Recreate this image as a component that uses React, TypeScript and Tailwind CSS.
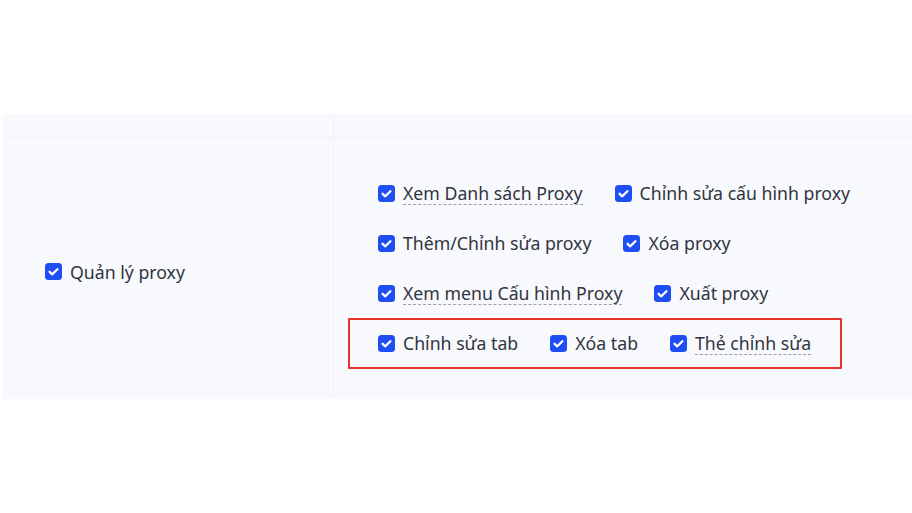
import React from 'react';

interface Perm {
  label: string;
  dashed?: boolean;
}

const rows: Perm[][] = [
  [{ label: 'Xem Danh sách Proxy', dashed: true }, { label: 'Chỉnh sửa cấu hình proxy' }],
  [{ label: 'Thêm/Chỉnh sửa proxy' }, { label: 'Xóa proxy' }],
  [{ label: 'Xem menu Cấu hình Proxy', dashed: true }, { label: 'Xuất proxy' }],
  [{ label: 'Chỉnh sửa tab' }, { label: 'Xóa tab' }, { label: 'Thẻ chỉnh sửa', dashed: true }],
];

function CheckBox() {
  return (
    <svg width="17" height="17" viewBox="0 0 17 17" className="shrink-0">
      <rect x="0" y="0" width="17" height="17" rx="3.5" fill="#1f4ef4" />
      <path d="M4.6 8.8 L7.3 11.3 L12.4 6.2" fill="none" stroke="#fff" strokeWidth="2.3" strokeLinecap="round" strokeLinejoin="round" />
    </svg>
  );
}

function Item({ label, dashed }: Perm) {
  return (
    <label className="flex items-center gap-2 mr-[32px]">
      <CheckBox />
      <span
        className={
          dashed
            ? 'leading-[22px] border-b border-dashed border-[#9aa0ab]'
            : 'leading-[22px] border-b border-transparent'
        }
      >
        {label}
      </span>
    </label>
  );
}

export default function App() {
  return (
    <div
      className="w-[912px] h-[513px] bg-white pt-[114px] text-[17.7px] text-[#30353f]"
      style={{ fontFamily: '"Noto Sans", "Open Sans", sans-serif' }}
    >
      <div className="ml-[3px] bg-[#f8f9fd]">
        <div className="grid grid-cols-[331px_1fr] h-[24px] border-b border-[#eef0f6]">
          <div className="border-r border-[#eef0f6]" />
          <div />
        </div>
        <div className="grid grid-cols-[331px_1fr] h-[261px]">
          <div className="flex items-center pl-[42px] pt-[7px] border-r border-[#f1f2f8]">
            <label className="flex items-center gap-2">
              <CheckBox />
              <span>Quản lý proxy</span>
            </label>
          </div>
          <div className="relative flex flex-col justify-center gap-[24px] pl-[44px]">
            {rows.map((row, i) => (
              <div key={i} className="flex items-center h-[26px]">
                {row.map((p) => (
                  <Item key={p.label} {...p} />
                ))}
              </div>
            ))}
            <div className="absolute left-[14px] top-[180px] w-[494px] h-[51px] border-2 border-[#e8332b] rounded-[1px] pointer-events-none" />
          </div>
        </div>
      </div>
    </div>
  );
}
